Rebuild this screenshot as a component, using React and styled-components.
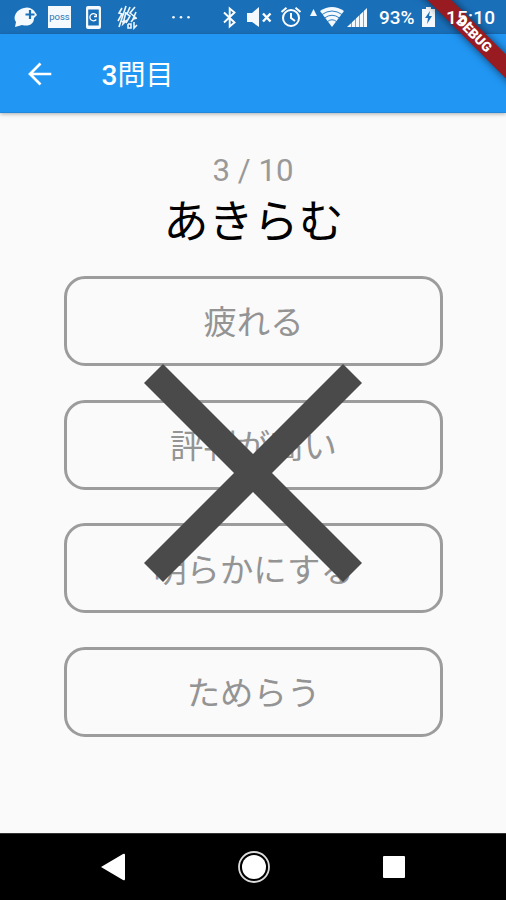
import React from "react";
import styled, { createGlobalStyle } from "styled-components";

const GlobalStyle = createGlobalStyle`
  * { box-sizing: border-box; }
  body { margin: 0; background: #fafafa; }
`;

const Screen = styled.div`
  position: relative;
  display: flex;
  flex-direction: column;
  width: 506px;
  height: 900px;
  overflow: hidden;
  background: #fafafa;
  font-family: Roboto, "Noto Sans CJK JP", sans-serif;
`;

const StatusBar = styled.header`
  display: flex;
  align-items: center;
  flex: none;
  height: 34px;
  padding-left: 13px;
  background: #1a6fb9;
  color: #fff;
`;

const StatusIcon = styled.svg`
  display: block;
  flex: none;
  width: ${(p) => p.$w}px;
  height: 26px;
  margin-left: ${(p) => p.$gap || 0}px;
  overflow: visible;
  fill: #f4f9fd;
`;

const PossBadge = styled.span`
  display: flex;
  align-items: center;
  justify-content: center;
  flex: none;
  width: 23px;
  height: 22px;
  margin-left: 11px;
  background: #f4f9fd;
  color: #2a75b5;
  font-size: 9.5px;
  line-height: 1;
`;

const StatusText = styled.span`
  position: relative;
  z-index: 2;
  flex: none;
  width: ${(p) => p.$w}px;
  margin-left: ${(p) => p.$gap}px;
  font-size: 19px;
  font-weight: 500;
  line-height: 37px;
  padding-top: 1px;
  letter-spacing: ${(p) => p.$spacing || 0}px;
  white-space: nowrap;
`;

const AppBar = styled.div`
  position: relative;
  display: flex;
  align-items: center;
  flex: none;
  height: 79px;
  padding: 1px 0 0 28px;
  background: #2196f3;
  color: #fff;
  border-bottom: 1px solid #2089dd;
  box-shadow: 0 1px 4px rgba(0, 0, 0, 0.32);
`;

const BackArrow = styled.svg`
  flex: none;
  width: 24px;
  height: 24px;
  fill: none;
  stroke: #fff;
  stroke-width: 2.7;
`;

const Title = styled.h1`
  margin: 0 0 0 49.5px;
  padding-top: 4px;
  font-size: 28px;
  font-weight: 400;
  line-height: 40px;
`;

const TitleNumber = styled.span`
  font-weight: 500;
`;

const Quiz = styled.main`
  display: flex;
  flex: 1;
  flex-direction: column;
  align-items: center;
  padding-top: 38px;
`;

const Progress = styled.div`
  height: 42px;
  font-size: 31.2px;
  line-height: 40px;
  color: #999;
`;

const Question = styled.h2`
  height: 60px;
  margin: 0;
  padding-left: 1px;
  font-size: 45px;
  font-weight: 400;
  line-height: 60px;
  color: #000;
`;

const Answers = styled.div`
  display: flex;
  flex-direction: column;
  gap: 33.7px;
  width: 380px;
  margin-top: 23px;
  padding-left: 1px;
`;

const Answer = styled.button`
  display: flex;
  align-items: center;
  justify-content: center;
  height: 90px;
  padding: 4px 0 0;
  border: 3px solid #9c9c9c;
  border-radius: 21px;
  background: transparent;
  color: #949494;
  font: 400 33.4px/1 Roboto, "Noto Sans CJK JP", sans-serif;
`;

const WrongMark = styled.svg`
  position: absolute;
  top: 364px;
  left: 144px;
  width: 218px;
  height: 218px;
  fill: #4a4a4a;
`;

const NavBar = styled.nav`
  display: flex;
  align-items: center;
  justify-content: space-between;
  flex: none;
  height: 67px;
  padding: 0 100px 0 101px;
  background: #000;
  border-top: 1px solid #333;
`;

const NavIcon = styled.svg`
  width: 24px;
  height: 34px;
  overflow: visible;
  fill: #fff;
`;

const Ribbon = styled.div`
  position: absolute;
  z-index: 1;
  top: 25.5px;
  right: -52.5px;
  width: 170px;
  height: 17px;
  transform: rotate(45deg);
  background: #981b22;
  box-shadow: 0 0 8px rgba(0, 0, 0, 0.6);
  color: #fff;
  font-size: 13.6px;
  font-weight: 900;
  line-height: 17px;
  text-align: center;
`;

const choices = ["疲れる", "評判が高い", "明らかにする", "ためらう"];

export default function App() {
  return (
    <Screen>
      <GlobalStyle />
      <StatusBar>
        <StatusIcon $w={24} viewBox="0 0 24 26">
          <path d="M11 4C16 2 21 5 24 11L21 14C21 20 16 23 9 21L2 23L3 18C-1 13 4 5 11 4Z" />
          <path d="M17 6V15M12.5 10.5H21.5" stroke="#1a6fb9" strokeWidth="2.2" />
        </StatusIcon>
        <PossBadge>poss</PossBadge>
        <StatusIcon $w={15} $gap={15} viewBox="0 0 15 26">
          <path d="M2 2H13Q15 2 15 4V23Q15 25 13 25H2Q0 25 0 23V4Q0 2 2 2ZM2.2 5.5V21.5H12.8V5.5Z" fillRule="evenodd" />
          <path d="M10.3 11A3.6 3.6 0 1 0 10.3 15.5M10.3 10V12.5H8" fill="none" stroke="#fff" strokeWidth="1.3" />
        </StatusIcon>
        <StatusIcon $w={21} $gap={16} viewBox="0 0 21 26">
          <path d="M5 4L2 9L5 10L1 17M9 2L6 11L2 23M9 8L6 20L10 16M13 3L10 10L13 12L9 19M18 3L13 9L18 13L14 18M19 8L16 15L20 14M11 20V24H14V20H11M17 18V24L20 21M5 18L8 16" fill="none" stroke="#edf6fd" strokeWidth="1.6" />
        </StatusIcon>
        <StatusIcon $w={18} $gap={34} viewBox="0 0 18 26">
          <circle cx="1.5" cy="13.2" r="1.3" />
          <circle cx="9" cy="13.2" r="1.3" />
          <circle cx="16.5" cy="13.2" r="1.3" />
        </StatusIcon>
        <StatusIcon $w={13} $gap={33} viewBox="0 0 13 26">
          <path d="M1 8.5L11.5 18.5L6.7 22.5V4.5L11.5 8.5L1 18.5" fill="none" stroke="#fff" strokeWidth="1.9" />
        </StatusIcon>
        <StatusIcon $w={24} $gap={11} viewBox="0 0 24 26">
          <path d="M0 9H5L12 3V23L5 18H0Z" />
          <path d="M16 9.5L23.5 17.5M23.5 9.5L16 17.5" stroke="#fff" strokeWidth="2.4" />
        </StatusIcon>
        <StatusIcon $w={20} $gap={10} viewBox="0 0 20 26">
          <circle cx="10" cy="14" r="8" fill="none" stroke="#fff" strokeWidth="2" />
          <path d="M10 9V14L14 17M0.5 8L5.5 3.8M19.5 8L14.5 3.8" fill="none" stroke="#fff" strokeWidth="2" />
        </StatusIcon>
        <StatusIcon $w={7} $gap={9} viewBox="0 0 7 26">
          <path d="M3.5 5L7 12H0Z" />
        </StatusIcon>
        <StatusIcon $w={24} $gap={3} viewBox="0 0 24 26">
          <path d="M0 7Q12 -1 24 7L12 23Z" />
          <path d="M2 10.5Q12 3.5 22 10.5M4.5 14Q12 8.5 19.5 14M7.5 17.5Q12 14 16.5 17.5" fill="none" stroke="#1a6fb9" strokeWidth="0.9" />
        </StatusIcon>
        <StatusIcon $w={20} $gap={3} viewBox="0 0 20 26">
          <path d="M20 4V23H0Z" />
          <path d="M4.5 15V24M8.5 11V24M12.5 7V24M16.5 3V24" stroke="#1a6fb9" strokeWidth="0.6" />
        </StatusIcon>
        <StatusText $w={37} $gap={12}>93%</StatusText>
        <StatusIcon $w={13} $gap={6} viewBox="0 0 13 26">
          <path d="M0 5H4V3H9V5H13V23H0Z" />
          <path d="M8 7L3 14H6L5 20L10 12H7Z" fill="#1a6fb9" />
        </StatusIcon>
        <StatusText $w={50} $gap={11} $spacing={0.2}>15:10</StatusText>
      </StatusBar>
      <AppBar>
        <BackArrow viewBox="0 0 24 24">
          <path d="M23.3 12H2.4M12.5 1.5L2 12L12.5 22.5" />
        </BackArrow>
        <Title>
          <TitleNumber>3</TitleNumber>問目
        </Title>
      </AppBar>
      <Quiz>
        <Progress>3 / 10</Progress>
        <Question>あきらむ</Question>
        <Answers>
          {choices.map((choice) => (
            <Answer key={choice}>{choice}</Answer>
          ))}
        </Answers>
      </Quiz>
      <NavBar>
        <NavIcon viewBox="0 0 24 34">
          <path d="M0 17L22 4Q24 3 24 5V29Q24 31 22 30Z" />
        </NavIcon>
        <NavIcon viewBox="0 0 24 34">
          <circle cx="12" cy="17" r="12" />
          <circle cx="12" cy="17" r="15" fill="none" stroke="#ddd" strokeWidth="1.8" />
        </NavIcon>
        <NavIcon viewBox="0 0 24 34">
          <rect x="1" y="6" width="22" height="22" rx="1" />
        </NavIcon>
      </NavBar>
      <WrongMark viewBox="0 0 218 218">
        <path d="M19 0L109 90L199 0L218 19L128 109L218 199L199 218L109 128L19 218L0 199L90 109L0 19Z" />
      </WrongMark>
      <Ribbon>DEBUG</Ribbon>
    </Screen>
  );
}
